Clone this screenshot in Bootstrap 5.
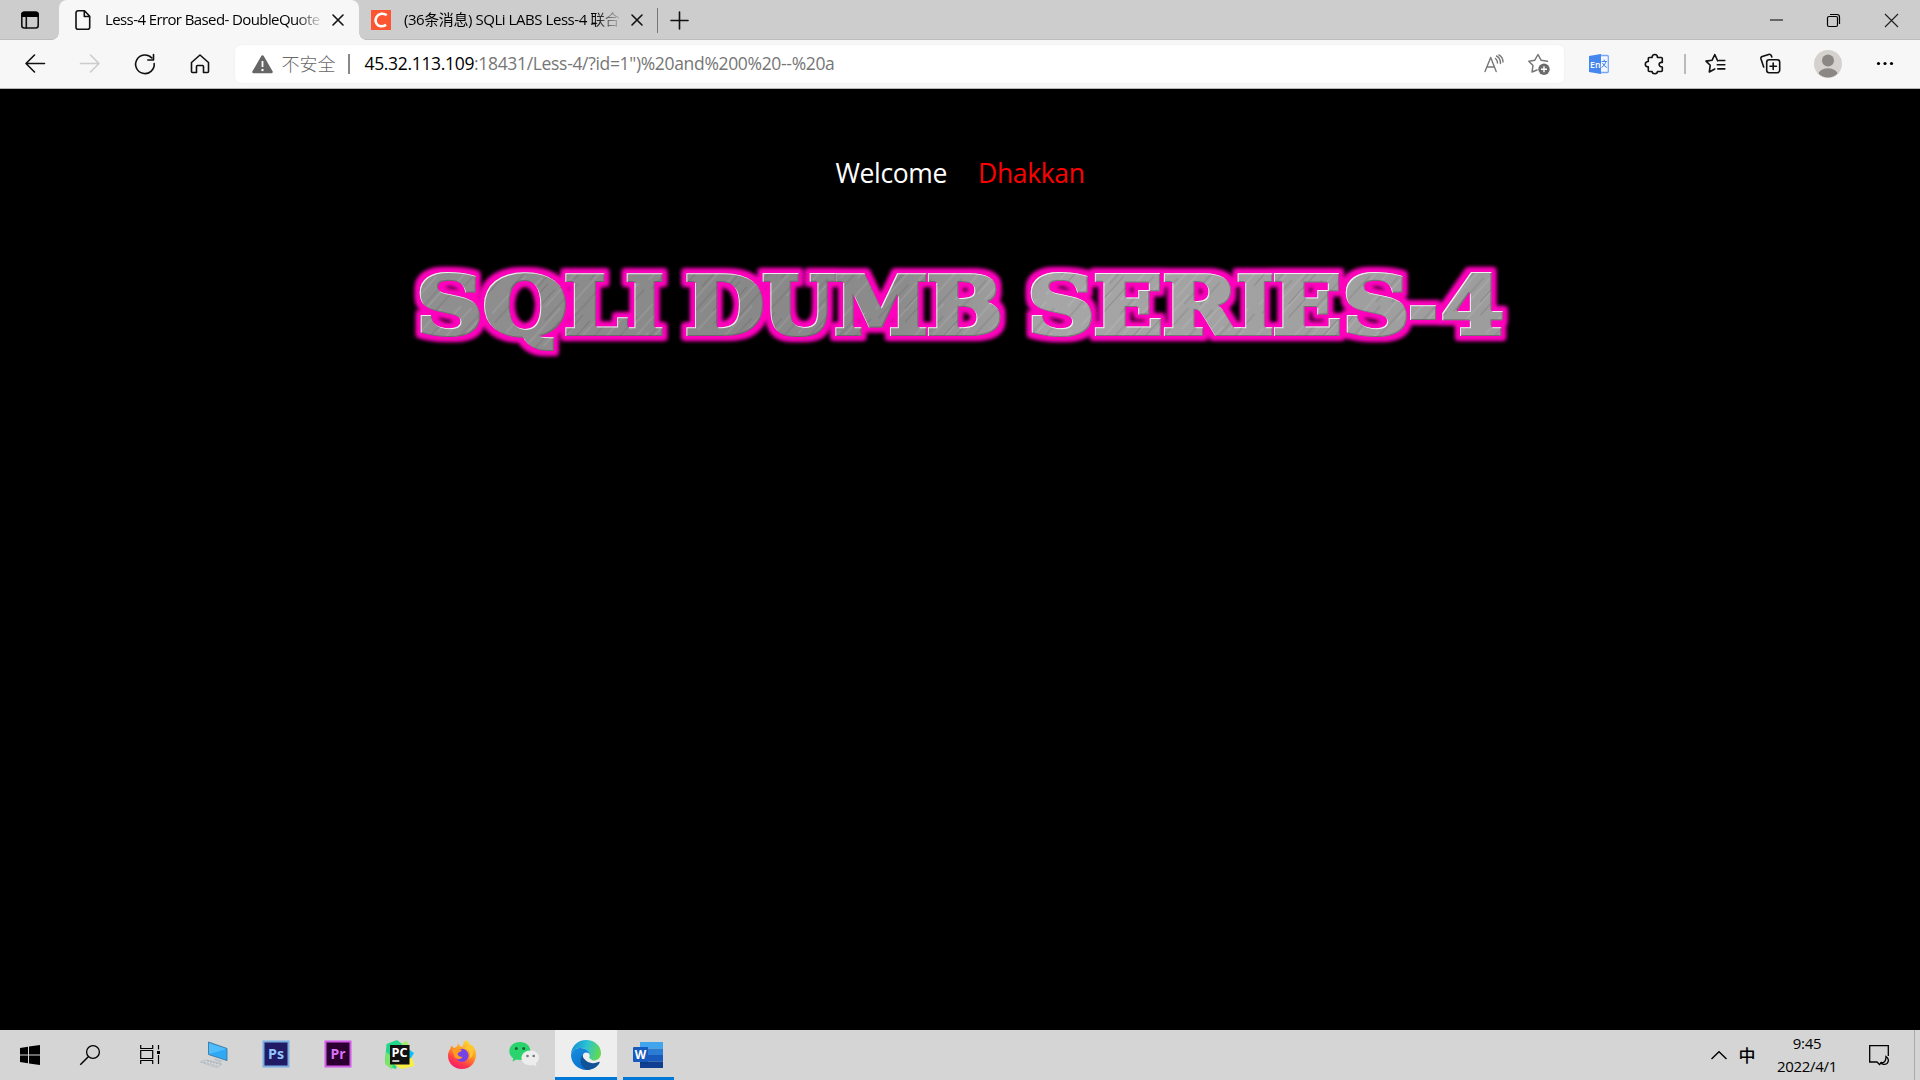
<!DOCTYPE html>
<html lang="zh-CN">
<head>
<meta charset="utf-8">
<title>Less-4 Error Based- DoubleQuotes String</title>
<link href="https://cdn.jsdelivr.net/npm/bootstrap@5.3.0/dist/css/bootstrap.min.css" rel="stylesheet">
<style>
  body { font-family: "Open Sans", "Noto Sans CJK SC", sans-serif; background: #000; color: #000; }
  svg { display: block; overflow: visible; }
  .ln { fill: none; stroke: #111; stroke-width: 1.6; stroke-linecap: round; stroke-linejoin: round; }
  .titlebar { height: 40px; background: #cdcdcd; box-shadow: inset 0 -1px 0 #bdbdbd; }
  .slot-first { width: 59px; }
  .tab-item { height: 40px; width: 300px; font-size: 15px; }
  .tab-item.current { background: #f7f7f7; border-radius: 8px 8px 0 0; }
  .tab-item.current::before, .tab-item.current::after { content: ""; position: absolute; bottom: 0; width: 7px; height: 7px; }
  .tab-item.current::before { left: -7px; background: radial-gradient(circle at 0 0, transparent 6.5px, #f7f7f7 7px); }
  .tab-item.current::after { right: -7px; background: radial-gradient(circle at 100% 0, transparent 6.5px, #f7f7f7 7px); }
  .tab-fav { width: 20px; margin-left: 14px; }
  .other .tab-fav { margin-left: 12px; }
  .tab-label { width: 217px; margin-left: 12px; line-height: 39px; height: 40px; white-space: nowrap;
    -webkit-mask-image: linear-gradient(90deg, #000 190px, transparent 219px); mask-image: linear-gradient(90deg, #000 190px, transparent 219px); }
  .lab-a { letter-spacing: -.6px; }
  .lab-b { letter-spacing: -.44px; margin-left: 13px; }
  .tab-x { width: 32px; }
  .v-sep { width: 1px; height: 25px; background: #777; margin-left: -2px; }
  .slot-plus { width: 43px; }
  .slot-win { width: 57.5px; }
  .toolbar-row { height: 49px; background: #f7f7f7; border-bottom: 1px solid #b5b5b5; padding: 0 7px; }
  .slot { width: 55px; }
  .address { height: 38px; background: #fff; border-radius: 6px; margin: 0 7px 0 8px; font-size: 17.5px; box-shadow: 0 0 3px #ececec; }
  .warn-icon { margin-left: 17px; }
  .warn-label { color: #686868; font-size: 18px; font-weight: 300; margin-left: 8.5px; font-family: "Noto Sans CJK SC", sans-serif; line-height: 34px; height: 36px; }
  .addr-sep { width: 2px; height: 20px; background: #888; margin: 0 15px 0 12px; }
  .url-text { color: #767676; letter-spacing: -.33px; line-height: 34px; height: 36px; }
  .url-text span { color: #000; }
  .tool-sep { width: 7px; }
  .tool-sep i { display: block; width: 2px; height: 20px; margin: auto; background: #bbb; }
  .slot-user { width: 59px; }
  .slot-more { width: 56px; }
  .page-area { height: 941px; background: #000; }
  .greet { padding-top: 59px; font-size: 26.5px; line-height: 50px; letter-spacing: -.35px; color: #fff; gap: 31px; }
  .greet .who { color: #f00; }
  .banner { margin-top: 46px; }
  .banner text { font-family: "DejaVu Serif", serif; font-weight: 700; font-size: 80px; fill: url(#metal); stroke: url(#metal); stroke-width: 4.2px; }
  .taskbar { height: 50px; background: #d5d5d5; }
  .tk { width: 60px; height: 50px; }
  .app { width: 62px; height: 50px; position: relative; }
  .app.first { margin-left: 3px; }
  .app.active { background: #eee; box-shadow: inset 0 -3px 0 #0078d7; }
  .app.open::after { content: ""; position: absolute; left: 6px; bottom: 0; width: 51px; height: 3px; background: #0078d7; }
  .clock { width: 92px; font-size: 15px; line-height: 23px; letter-spacing: -.3px; padding-bottom: 1px; }
  .ime { width: 28px; font-size: 17px; font-family: "Noto Sans CJK SC", sans-serif; font-weight: 500; line-height: 48px; }
  .tray-up { width: 29px; }
  .notif { width: 52px; }
  .peek { width: 6px; height: 50px; border-left: 1px solid #aaa; margin-left: 9px; }
</style>
<script src="https://cdn.jsdelivr.net/npm/bootstrap@5.3.0/dist/js/bootstrap.bundle.min.js"></script>
</head>
<body class="overflow-hidden">
<div class="d-flex flex-column vh-100">

  <header class="titlebar d-flex align-items-center flex-shrink-0">
    <div class="slot-first d-flex justify-content-center">
      <svg width="20" height="20"><rect x="1.8" y="2.2" width="16.4" height="15.8" rx="2.5" class="ln"/><path d="M1.5 7V4a2.5 2.5 0 0 1 2.500-2.500h12a2.500 2.500 0 0 1 2.500 2.500v3z"/><path class="ln" d="M6.300 7v11"/></svg>
    </div>
    <div class="tab-item current d-flex align-items-center position-relative">
      <div class="tab-fav d-flex justify-content-center"><svg width="16" height="20"><path class="ln" d="M3 .8h6.500l5.200 5.500v11a2 2 0 0 1-2 2H3a2 2 0 0 1-2-2v-14.500a2 2 0 0 1 2-2zM9.300 1v5.500h5.200"/></svg></div>
      <div class="tab-label lab-a">Less-4 Error Based- DoubleQuote</div>
      <div class="tab-x d-flex justify-content-center"><svg width="10" height="10"><path class="ln" d="M0 0l10 10M10 0L0 10"/></svg></div>
    </div>
    <div class="tab-item other d-flex align-items-center">
      <div class="tab-fav"><svg width="20" height="20"><rect width="20" height="20" fill="#fc5531"/><path d="M15.700 5.200C12.500 2.700 7.500 3.400 5.400 7.100c-2.200 4.300.2 9 4.800 9.200 1.900 0 3.500-.5 4.900-1.400" fill="none" stroke="#fff" stroke-width="2.500"/></svg></div>
      <div class="tab-label lab-b">(36条消息) SQLi LABS Less-4 联合</div>
      <div class="tab-x d-flex justify-content-center"><svg width="10" height="10"><path class="ln" d="M0 0l10 10M10 0L0 10"/></svg></div>
    </div>
    <div class="v-sep"></div>
    <div class="slot-plus d-flex justify-content-center"><svg width="17" height="17"><path class="ln" d="M8.500 0v17M0 8.500h17"/></svg></div>
    <div class="d-flex ms-auto align-items-center">
      <div class="slot-win d-flex justify-content-center"><svg width="13" height="13"><path d="M0 6h13" stroke="#000"/></svg></div>
      <div class="slot-win d-flex justify-content-center"><svg width="13" height="13"><rect x=".5" y="2.500" width="10" height="10" rx="1.500" fill="none" stroke="#000" stroke-width="1.200"/><path d="M3 .5h7a2.500 2.500 0 0 1 2.500 2.500v7" fill="none" stroke="#000" stroke-width="1.200"/></svg></div>
      <div class="slot-win d-flex justify-content-center"><svg width="13" height="13"><path d="M0 0l13 13M13 0L0 13" stroke="#222" stroke-width="1.200"/></svg></div>
    </div>
  </header>

  <nav class="toolbar-row d-flex align-items-center flex-shrink-0">
    <div class="slot d-flex justify-content-center"><svg width="20" height="20"><path class="ln" d="M19.500 9.500H1M9.500 1L1 9.500 9.500 18"/></svg></div>
    <div class="slot d-flex justify-content-center"><svg width="20" height="20"><path class="ln" style="stroke:#ccc" d="M.5 9.500H19M10.500 1L19 9.500 10.500 18"/></svg></div>
    <div class="slot d-flex justify-content-center"><svg width="20" height="20"><path class="ln" d="M19.200 9.500A9.300 9.300 0 1 1 16.800 4M18.500.5V6h-5.700"/></svg></div>
    <div class="slot d-flex justify-content-center"><svg width="20" height="20"><path class="ln" d="M1.500 8.500L10 1l8.500 7.500v9a1 1 0 0 1-1 1h-4v-6a1 1 0 0 0-1-1h-5a1 1 0 0 0-1 1v6h-4a1 1 0 0 1-1-1z"/></svg></div>
    <div class="address d-flex align-items-center flex-grow-1">
      <svg class="warn-icon" width="21" height="19"><path d="M10.500 1.500L19.500 17H1.500z" fill="#666" stroke="#666" stroke-width="2.500" stroke-linejoin="round"/><path d="M10.500 6v6" stroke="#fff" stroke-width="1.800"/><circle cx="10.500" cy="15" r="1.200" fill="#fff"/></svg>
      <div class="warn-label">不安全</div>
      <div class="addr-sep"></div>
      <div class="url-text"><span>45.32.113.109</span>:18431/Less-4/?id=1")%20and%200%20--%20a</div>
      <div class="ms-auto d-flex align-items-center">
        <svg class="me-4" width="20" height="18"><g class="ln" style="stroke:#777;stroke-width:1.400"><path d="M1 16.500L6.700 2.500l5.500 14M2.800 12h7.700M11.500 3.500q2 1.500 2 4.500M12.500 1q4 2 4 7.500M15-.2q4 2.500 4 7.200"/></g></svg>
        <svg width="22" height="22" style="margin-right:14px"><path class="ln" style="stroke:#777;stroke-width:1.500" d="M9 17l-5 2 1-6.500L.8 8.200l6-1L10 1.500l3 5.700 6.500 1"/><circle cx="16" cy="16.300" r="5.700" fill="#6b6b6b"/><path d="M13 16.300h6M16 13.300v6" stroke="#fff" stroke-width="1.400"/></svg>
      </div>
    </div>
    <div class="slot d-flex justify-content-center"><svg width="20" height="20"><rect x="8" y="1.500" width="11.300" height="17" rx="1" fill="#f3f7ff" stroke="#79a8f2" stroke-width="1.300"/><path d="M0 2L12 0v20L0 18z" fill="#4587ef"/><path d="M12.500 7.500h5.500M15.200 5.500v2M17 7.500q-1 4-4.500 6M13.500 9q1.500 3.500 4.500 4.500" fill="none" stroke="#4587ef"/><text x="1" y="14" font-size="9.500" font-family="Open Sans" font-weight="600" fill="#fff" textLength="10.500" lengthAdjust="spacingAndGlyphs">En</text></svg></div>
    <div class="slot d-flex justify-content-center"><svg width="20" height="20"><path class="ln" transform="translate(.8 0)" d="M4.500 3.500H7.300c0-4 5.400-4 5.400 0h3.800q1 0 1 1v4c-4-1-4.500 4.500 0 4.500v3.500q0 1-1 1h-3.800c0 3-5.400 3-5.400 0H4.500q-1 0-1-1V12.800c-4 0-4-5.300 0-5.300v-3q0-1 1-1z"/></svg></div>
    <div class="tool-sep"><i></i></div>
    <div class="slot d-flex justify-content-center"><svg width="20" height="20"><path class="ln" transform="translate(-.7 -.5)" d="M12.300 7.300L9.500 1 6.700 6.800.7 7.600l4.200 4.200L4 18.500l5.500-3M13.500 7h6M12 11.200h7.500M12.500 15.400h7"/></svg></div>
    <div class="slot d-flex justify-content-center"><svg width="20" height="20"><g transform="translate(-.8 -.3)"><path class="ln" d="M3.500 13.300L.8 5.200Q.3 3.500 2 2.900L8.500.7q1.700-.5 2.500 1l.6 1.600"/><rect class="ln" x="6.500" y="6" width="13" height="13" rx="2.500"/><path class="ln" d="M9.800 12.500h6.400M13 9.300v6.400"/></g></svg></div>
    <div class="slot-user d-flex justify-content-center"><svg width="28" height="28"><circle cx="14" cy="14" r="14" fill="#d4d1ce"/><clipPath id="av"><circle cx="14" cy="14" r="13.500"/></clipPath><g fill="#8b8784" clip-path="url(#av)"><circle cx="14" cy="10.500" r="6"/><ellipse cx="14" cy="25" rx="10" ry="6.800"/></g></svg></div>
    <div class="slot-more d-flex justify-content-center"><svg width="18" height="4"><circle cx="2.500" cy="1.500" r="1.600"/><circle cx="9" cy="1.500" r="1.600"/><circle cx="15.500" cy="1.500" r="1.600"/></svg></div>
  </nav>

  <main class="page-area flex-shrink-0">
    <div class="greet d-flex justify-content-center"><span>Welcome</span><span class="who">Dhakkan</span></div>
    <div class="banner">
      <svg width="1920" height="120" viewBox="0 244 1920 120">
        <defs>
          <linearGradient id="tone" x1="0" x2="1"><stop offset="0" stop-color="#909090"/><stop offset=".3" stop-color="#888"/><stop offset=".45" stop-color="#8c8c8c"/><stop offset=".58" stop-color="#a6a6a6"/><stop offset="1" stop-color="#9c9c9c"/></linearGradient>
          <pattern id="metal" patternUnits="userSpaceOnUse" x="400" y="244" width="1120" height="120">
            <rect width="1120" height="120" fill="url(#tone)"/>
            <rect width="1120" height="120" fill="url(#scratch)"/>
          </pattern>
          <pattern id="scratch" patternUnits="userSpaceOnUse" width="47" height="130" patternTransform="rotate(42)">
            <path d="M2 0v40M9 30v50M15.500 0v30M21 70v50M27 20v40M34 60v50M40 5v35M44 80v45" stroke="#fff" stroke-opacity=".17"/>
            <path d="M4.500 60v50M12 0v40M18 40v50M24 0v30M29 80v45M37 25v50M42.500 60v40" stroke="#333" stroke-opacity=".2"/>
          </pattern>
          <filter id="neon" filterUnits="userSpaceOnUse" x="390" y="244" width="1140" height="130" color-interpolation-filters="sRGB">
            <feMorphology in="SourceAlpha" operator="dilate" radius="3.500" result="fat"/>
            <feGaussianBlur in="fat" stdDeviation="1.900" result="soft"/>
            <feFlood flood-color="#ff00bd"/><feComposite in2="soft" operator="in" result="glow"/>
            <feOffset in="SourceAlpha" dx="1" dy="1" result="sh"/>
            <feFlood flood-color="#fff" flood-opacity=".85"/><feComposite in2="SourceAlpha" operator="in"/><feComposite in2="sh" operator="out" result="hi"/>
            <feOffset in="SourceAlpha" dx="-1" dy="-1" result="sh2"/>
            <feFlood flood-color="#505050" flood-opacity=".55"/><feComposite in2="SourceAlpha" operator="in"/><feComposite in2="sh2" operator="out" result="lo"/>
            <feMerge><feMergeNode in="glow"/><feMergeNode in="glow"/><feMergeNode in="SourceGraphic"/><feMergeNode in="lo"/><feMergeNode in="hi"/></feMerge>
          </filter>
        </defs>
        <g filter="url(#neon)">
          <text y="334"><tspan x="416" textLength="67" lengthAdjust="spacingAndGlyphs">S</tspan><tspan x="482.500" textLength="85" lengthAdjust="spacingAndGlyphs">Q</tspan><tspan x="563.500" textLength="64" lengthAdjust="spacingAndGlyphs">L</tspan><tspan x="625" textLength="39" lengthAdjust="spacingAndGlyphs">I</tspan></text>
          <text y="334"><tspan x="684.500" textLength="80" lengthAdjust="spacingAndGlyphs">D</tspan><tspan x="762" textLength="73" lengthAdjust="spacingAndGlyphs">U</tspan><tspan x="834" textLength="94" lengthAdjust="spacingAndGlyphs">M</tspan><tspan x="926" textLength="77" lengthAdjust="spacingAndGlyphs">B</tspan></text>
          <text y="334"><tspan x="1027" textLength="68" lengthAdjust="spacingAndGlyphs">S</tspan><tspan x="1093" textLength="70" lengthAdjust="spacingAndGlyphs">E</tspan><tspan x="1162" textLength="76" lengthAdjust="spacingAndGlyphs">R</tspan><tspan x="1236" textLength="38" lengthAdjust="spacingAndGlyphs">I</tspan><tspan x="1272" textLength="70" lengthAdjust="spacingAndGlyphs">E</tspan><tspan x="1342" textLength="68" lengthAdjust="spacingAndGlyphs">S</tspan><tspan x="1408" textLength="30" lengthAdjust="spacingAndGlyphs">-</tspan><tspan x="1441" textLength="63" lengthAdjust="spacingAndGlyphs">4</tspan></text>
        </g>
      </svg>
    </div>
  </main>

  <footer class="taskbar d-flex align-items-center flex-shrink-0">
    <div class="tk d-flex align-items-center justify-content-center"><svg width="20" height="20"><path d="M0 3l8-1.200v7.700H0zM9 1.600L20 0v9.500H9zM0 10.500h8v7.700L0 17zM9 10.500h11V20L9 18.400z"/></svg></div>
    <div class="tk d-flex align-items-center justify-content-center"><svg width="20" height="20"><circle cx="13" cy="7" r="6.400" fill="none" stroke="#000" stroke-width="1.300"/><path d="M8.300 11.700L.3 19.700" stroke="#000" stroke-width="1.500"/></svg></div>
    <div class="tk d-flex align-items-center justify-content-center"><svg width="20" height="20"><path d="M.7 0v3.500h12V0M.7 19v-3.500h12V19M.7 5.500h12v8H.7zM18.500 0v4.500M18.500 10v9" fill="none" stroke="#000" stroke-width="1.200"/><rect x="17" y="6" width="3" height="3"/></svg></div>
    <div class="app first d-flex align-items-center justify-content-center"><svg width="28" height="26"><path d="M8.500 0l18.500 6.500v12L8.500 12.500z" fill="#2eaaf5" stroke="#336f96" stroke-width=".8"/><path d="M9 1l17.500 6L9 12z" fill="#66c8ff" opacity=".6"/><path d="M15 16.500l8 2.500-3 1.500-6-2.500z" fill="#b8c4cb"/><path d="M6 18l16 4-5 3.500L.5 20z" fill="#d8dcde" stroke="#a9b1b5" stroke-width=".7"/><path d="M4 20l14 4M7 18.800l13 3.600" stroke="#929da3" stroke-width=".7" stroke-dasharray="2 1"/></svg></div>
    <div class="app d-flex align-items-center justify-content-center"><svg width="28" height="28"><rect x=".5" y="-.5" width="27" height="27" fill="#7bafe4"/><rect x="2.500" y="1.500" width="23" height="23" fill="#211b65"/><text x="6" y="18" font-family="Open Sans" font-weight="700" font-size="15" fill="#90c6fc" textLength="16" lengthAdjust="spacingAndGlyphs">Ps</text></svg></div>
    <div class="app d-flex align-items-center justify-content-center"><svg width="28" height="28"><rect x=".5" y="-.5" width="27" height="27" fill="#d45bea"/><rect x="2.500" y="1.500" width="23" height="23" fill="#2b0030"/><text x="6.500" y="18" font-family="Open Sans" font-weight="700" font-size="15" fill="#dc70f3" textLength="15" lengthAdjust="spacingAndGlyphs">Pr</text></svg></div>
    <div class="app d-flex align-items-center justify-content-center"><svg width="30" height="30"><path d="M1.500 4L12 0l5 4-6 25L6 27.500 0 22z" fill="#21d789"/><path d="M17 3l5-2 2.500 6-6 4z" fill="#a5ec62"/><path d="M8 24l2-6 15-7 4.500 15-13 3z" fill="#f7ef45"/><path d="M22 8l7 5-3 5-5 2z" fill="#07c3f2"/><path d="M1 12l8 6-2 11.500L0 24z" fill="#7ce567"/><rect x="5" y="5" width="19.500" height="19.500" fill="#111"/><text x="6.500" y="16.500" font-family="Open Sans" font-weight="700" font-size="12" fill="#fff" textLength="16" lengthAdjust="spacingAndGlyphs">PC</text><path d="M7.300 21h7" stroke="#fff" stroke-width="1.500"/></svg></div>
    <div class="app d-flex align-items-center justify-content-center"><svg width="28" height="28"><defs><linearGradient id="ff" x1=".8" y1="0" x2=".3" y2="1"><stop offset="0" stop-color="#ffe43a"/><stop offset=".45" stop-color="#ff9322"/><stop offset=".8" stop-color="#ff354d"/><stop offset="1" stop-color="#f41870"/></linearGradient></defs><path d="M18 -1c3 1.500 4 4 4 5l2 0c2 2 4 5 4 9.500C28 22 22 28 14 28S0 22.500 0 14.500C0 12 1.200 9 2.500 7.500l.8-3L6 7l2.500-1 2-4c0 2 1.500 3.500 4 4C15 3.500 16 .5 18-1z" fill="url(#ff)"/><circle cx="14" cy="14.300" r="6.500" fill="#7542e5"/><path d="M4 9c3-2.500 5-2 7-1l3 1c-1 2-4 2-4.500 4 .5 2 2.500 3 5 3-3 4-8 2-8.500-2z" fill="#ff9a24"/><path d="M15 8c6-2 9 5 6 10 6-3 5-11 1-14z" fill="#ffc832"/></svg></div>
    <div class="app d-flex align-items-center justify-content-center"><svg width="31" height="26"><path d="M11 0C4.500 0 .3 4.200.3 9.200c0 3 1.700 5.500 4 7L3.500 19.500l4-2C15 19.500 21.500 15 21.500 9.200 21.500 4.200 17.200 0 11 0z" fill="#2bd36d"/><circle cx="7.300" cy="6.500" r="1.500" fill="#176336"/><circle cx="14.700" cy="6.500" r="1.500" fill="#176336"/><path d="M21.500 8.500c-5.200 0-9 3.500-9 7.500 0 5 5.500 8.500 12 7l3 1.500-.6-3c5.500-4.500 3.600-13-5.400-13z" fill="#ededed"/><circle cx="18.500" cy="14" r="1.300" fill="#777"/><circle cx="24.700" cy="14" r="1.300" fill="#777"/></svg></div>
    <div class="app active d-flex align-items-center justify-content-center"><svg width="30" height="30"><defs><linearGradient id="e1" x1="0" y1=".4" x2="1" y2=".6"><stop offset="0" stop-color="#168fd8"/><stop offset=".5" stop-color="#2dc4cf"/><stop offset="1" stop-color="#68db48"/></linearGradient><linearGradient id="e2" x1="0" y1="0" x2=".6" y2="1"><stop offset="0" stop-color="#188fdc"/><stop offset="1" stop-color="#0871cf"/></linearGradient></defs><path d="M0 14C.5 6 7 0 15 0c9 0 15 6 15 13 0 5-3.500 7.500-7.500 7.500-3 0-5.500-1-4.500-3C20 13 16 8 9.500 8 5 8 1.500 10.500 0 14z" fill="url(#e1)"/><path d="M0 15C.5 10.500 5 8 9.500 8c6 0 9.500 4 9 7.500-1-3-6-3-7 1-1 6 2 11 8 13C10 32 0 25 0 15z" fill="url(#e2)"/><path d="M11.500 15C8 20 9.500 27 15.500 29.800c5.500.5 10.500-2.500 13-6.800.5-1-.2-1.500-1-1C21 25 13 22 11.500 15z" fill="#125299"/><circle cx="15.300" cy="15.700" r="3.200" fill="#eee"/><path d="M14 16.500c1 3 4 4.500 8 4.200l-4-3z" fill="#eee"/></svg></div>
    <div class="app open d-flex align-items-center justify-content-center"><svg width="30" height="26"><path d="M7 0h23v6.500H7z" fill="#41a5ee"/><path d="M7 6.500h23V13H7z" fill="#2b7cd3"/><path d="M7 13h23v6.500H7z" fill="#185abd"/><path d="M7 19.500h23V26H7z" fill="#103f91"/><path d="M7 5h8v17H7z" fill="#0b3979" opacity=".4"/><rect y="5" width="15" height="15" rx="1" fill="#185abd"/><text x="1.800" y="17" font-family="Open Sans" font-weight="700" font-size="12" fill="#fff" textLength="11.500" lengthAdjust="spacingAndGlyphs">W</text></svg></div>
    <div class="d-flex align-items-center ms-auto">
      <div class="tray-up d-flex justify-content-center"><svg width="16" height="8"><path d="M.5 8L8 .8 15.500 8" fill="none" stroke="#000" stroke-width="1.400"/></svg></div>
      <div class="ime text-center">中</div>
      <div class="clock text-center"><div>9:45</div><div>2022/4/1</div></div>
      <div class="notif d-flex justify-content-center"><svg width="20" height="20"><path d="M13 17l-2.500 2.500L8 17H.7V.7h18.600V11" fill="none" stroke="#000" stroke-width="1.300"/><path d="M17 11.500c3 2 3 5 1 7-2 1.500-5 1-6-.5 3 0 5-2 5-6.500z" fill="none" stroke="#000" stroke-width="1.300"/></svg></div>
      <div class="peek"></div>
    </div>
  </footer>
</div>
</body>
</html>
